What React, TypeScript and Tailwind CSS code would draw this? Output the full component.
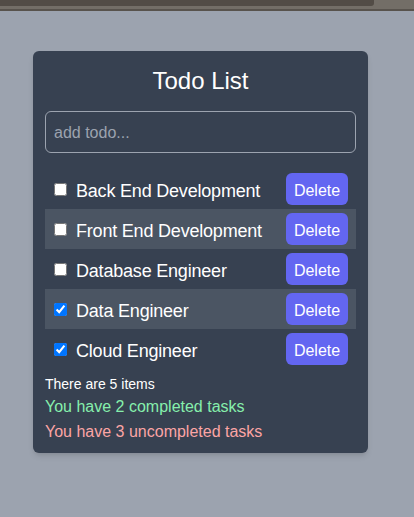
const todos = [
  { id: 1, text: 'Back End Development', done: false },
  { id: 2, text: 'Front End Development', done: false },
  { id: 3, text: 'Database Engineer', done: false },
  { id: 4, text: 'Data Engineer', done: true },
  { id: 5, text: 'Cloud Engineer', done: true }
];

const App = () => {
  const completed = todos.filter((t) => t.done).length;

  return (
    <div className="min-h-[517px] bg-[#9ca3af] font-['Liberation_Sans',Arial,sans-serif]">
      <div className="h-[11px] bg-[#736e67] border-b-2 border-[#58534d] flex">
        <div className="w-[374px] h-[6px] bg-[#524c46] rounded-br-[3px]" />
      </div>
      <div className="pt-10 pl-[33px]">
        <div className="w-[335px] bg-[#374151] rounded-md px-3 pt-[14px] pb-[9px] shadow-md">
          <h1 className="text-2xl text-white text-center leading-8">Todo List</h1>
          <input
            type="text"
            placeholder="add todo..."
            className="mt-[14px] w-full h-[42px] px-2 pt-[2px] bg-transparent border border-[#9ca3af] rounded-md text-base text-white placeholder:text-[#9ca3af] outline-none"
          />
          <ul className="mt-4">
            {todos.map((todo, i) => (
              <li
                key={todo.id}
                className={`flex items-center h-10 pl-2 pr-2 ${i % 2 === 1 ? 'bg-[#4b5563]' : ''}`}
              >
                <input type="checkbox" defaultChecked={todo.done} className="w-[13px] h-[13px] ml-[1px] mt-[1px]" />
                <span className="ml-[9px] pt-[3px] text-lg text-white flex-1 tracking-[-0.2px]">{todo.text}</span>
                <button className="bg-[#6366f1] text-white text-base h-8 w-[62px] pt-[3px] rounded-md">Delete</button>
              </li>
            ))}
          </ul>
          <p className="mt-[5px] text-sm leading-5 text-white">There are {todos.length} items</p>
          <p className="mt-[1px] text-base leading-6 text-[#86efac]">You have {completed} completed tasks</p>
          <p className="mt-[1px] text-base leading-6 text-[#fca5a5]">You have {todos.length - completed} uncompleted tasks</p>
        </div>
      </div>
    </div>
  );
};

export default App;
